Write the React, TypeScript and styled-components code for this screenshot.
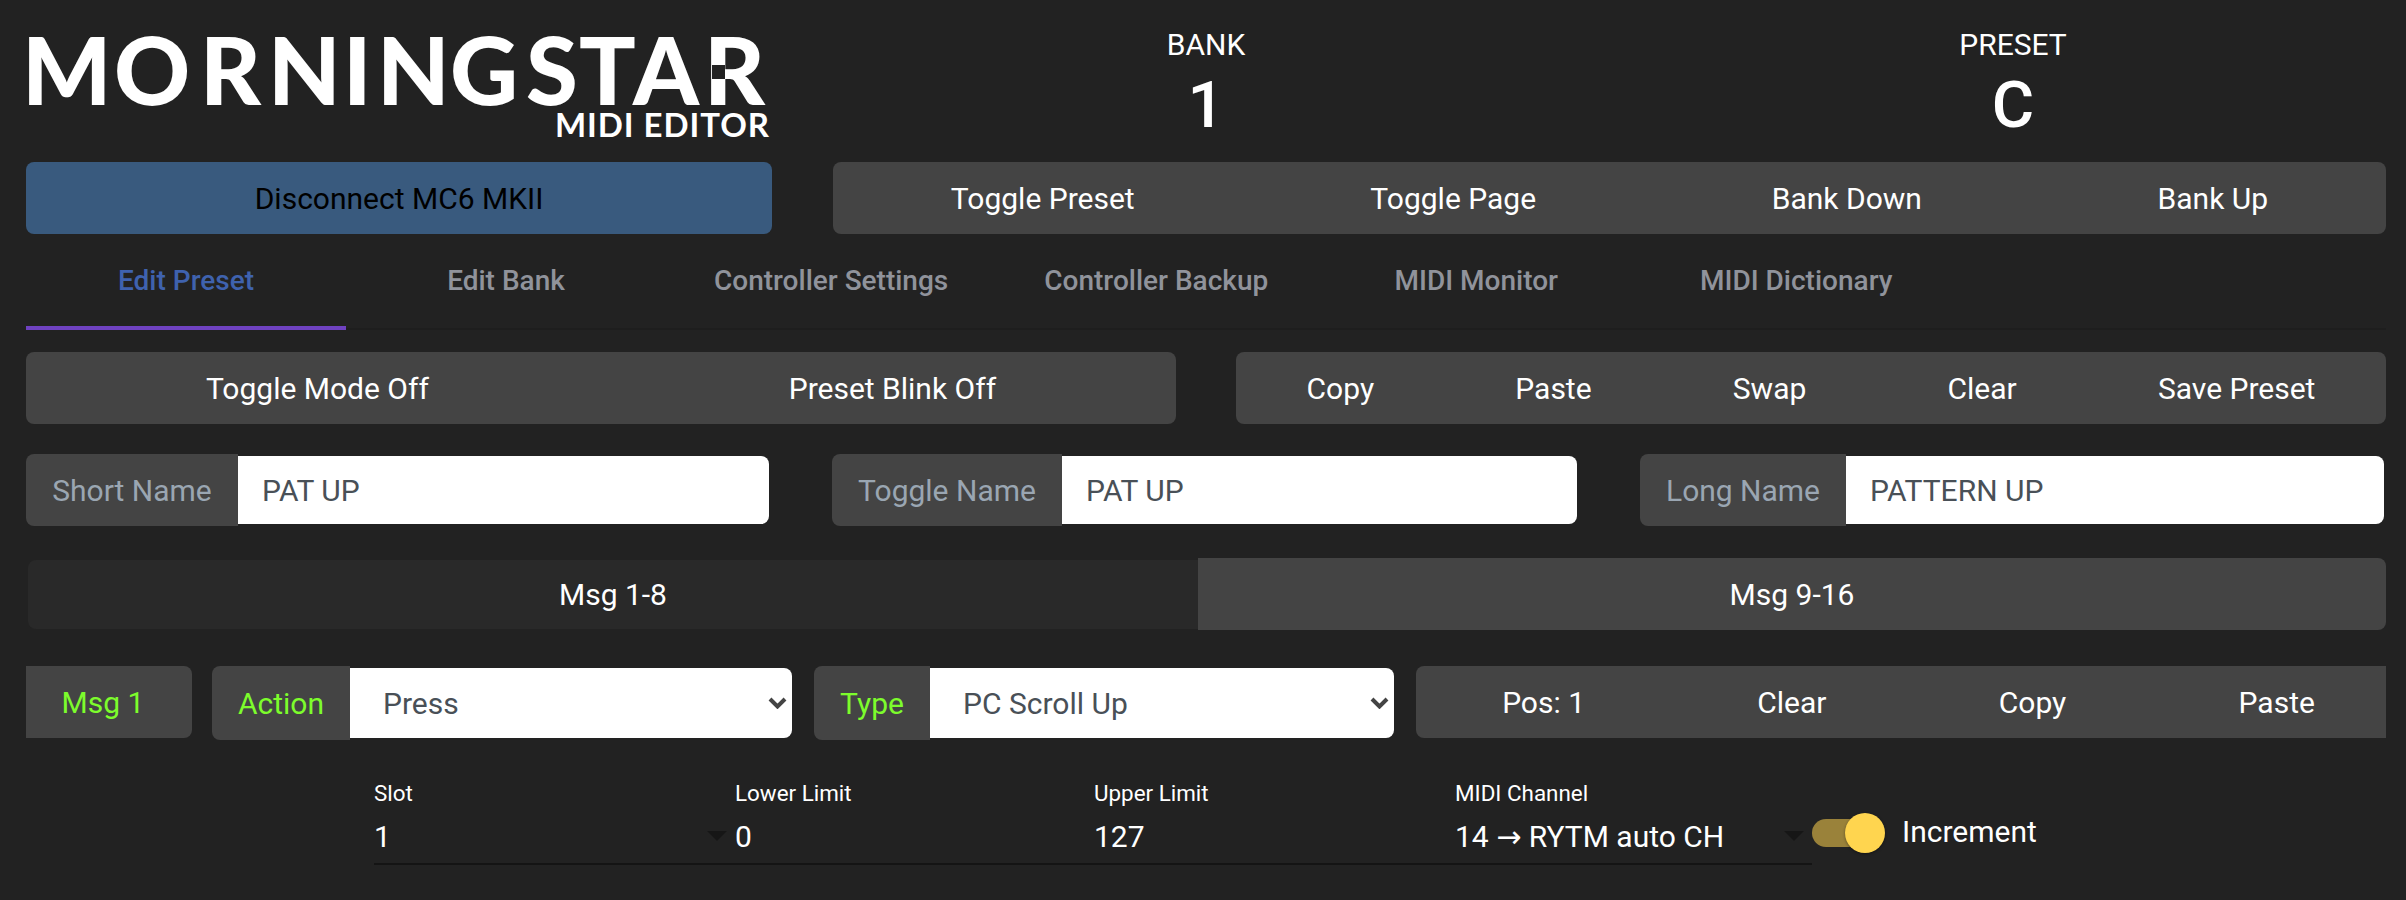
import styled, { createGlobalStyle } from 'styled-components';

const GlobalStyle = createGlobalStyle`
    html, body {
        margin: 0;
        background: #222222;
    }
    body {
        font-family: Roboto, "Liberation Sans", sans-serif;
        color: #ffffff;
    }
`;

const Page = styled.div`
    width: 2360px;
    height: 900px;
    padding: 0 20px 0 26px;
    overflow: hidden;
`;

const Header = styled.header`
    display: grid;
    grid-template-columns: 778px 804px 778px;
    height: 162px;
`;

const LogoMark = styled.svg`
    display: block;
    margin-left: -26px;
    width: 804px;
    height: 162px;
`;

const LogoText = styled.text<{ $size: number; $weight: number }>`
    font-family: Lato, sans-serif;
    font-weight: ${({ $weight }) => $weight};
    font-size: ${({ $size }) => $size}px;
    fill: #ffffff;
`;

const Stat = styled.div<{ $shift?: number }>`
    padding-top: 27px;
    padding-left: ${({ $shift }) => $shift ?? 0}px;
    text-align: center;
`;

const StatLabel = styled.div`
    font-size: 30px;
    line-height: 36px;
`;

const StatValue = styled.div`
    margin-top: 8px;
    font-size: 65px;
    font-weight: 500;
    line-height: 68px;
`;

const TopRow = styled.div`
    display: grid;
    grid-template-columns: 746px 1553px;
    column-gap: 61px;
`;

const ButtonGroup = styled.div`
    display: flex;
    height: 72px;
    background: #444444;
    border-radius: 8px;
    overflow: hidden;
`;

const GroupButton = styled.button`
    flex: 1 1 auto;
    padding: 0;
    border: 0;
    background: transparent;
    color: #ffffff;
    font: 400 30px Roboto, sans-serif;
`;

const ConnectButton = styled.button`
    height: 72px;
    padding: 0;
    border: 0;
    border-radius: 8px;
    background: #395a7e;
    color: #000000;
    font: 400 30px Roboto, sans-serif;
`;

const Tabs = styled.nav`
    display: flex;
    height: 96px;
    border-bottom: 2px solid #1e1e1e;
    box-sizing: border-box;
`;

const Tab = styled.div<{ $active?: boolean }>`
    box-sizing: border-box;
    min-width: 320px;
    height: 96px;
    padding: 0 48px;
    display: flex;
    align-items: center;
    justify-content: center;
    font-size: 28px;
    font-weight: 500;
    color: ${({ $active }) => ($active ? '#3f62ae' : '#90939b')};
    border-bottom: 4px solid ${({ $active }) => ($active ? '#6f42c1' : 'transparent')};
`;

const PresetRow = styled.div`
    display: grid;
    grid-template-columns: 1150px 1150px;
    column-gap: 60px;
    margin-top: 22px;
`;

const NameRow = styled.div`
    display: grid;
    grid-template-columns: 743px 745px 744px;
    column-gap: 63px;
    margin-top: 30px;
`;

const InputGroup = styled.label`
    display: flex;
    align-items: center;
    height: 72px;
`;

const Addon = styled.span<{ $green?: boolean; $width: number }>`
    flex: 0 0 ${({ $width }) => $width}px;
    box-sizing: border-box;
    height: 100%;
    display: flex;
    align-items: center;
    justify-content: center;
    background: #444444;
    border-radius: 8px 0 0 8px;
    font-size: 30px;
    color: ${({ $green }) => ($green ? '#7dfc2c' : '#9aa6b2')};
`;

const TextInput = styled.input`
    flex: 1;
    min-width: 0;
    box-sizing: border-box;
    height: 68px;
    padding: 0 24px;
    border: 0;
    outline: 0;
    border-radius: 0 8px 8px 0;
    background: #ffffff;
    color: #495057;
    font: 400 30px Roboto, sans-serif;
`;

const MsgTabs = styled.div`
    display: flex;
    align-items: center;
    margin-top: 32px;
    height: 72px;
`;

const MsgTab = styled.button<{ $active?: boolean }>`
    flex: ${({ $active }) => ($active ? '0 0 1170px' : '1 1 0')};
    padding: 0;
    border: 0;
    color: #ffffff;
    font: 400 30px Roboto, sans-serif;
    background: ${({ $active }) => ($active ? '#292929' : '#444444')};
    height: ${({ $active }) => ($active ? '69px' : '72px')};
    margin-left: ${({ $active }) => ($active ? '2px' : '0')};
    border-radius: ${({ $active }) => ($active ? '8px 0 0 8px' : '0 8px 8px 0')};
`;

const MessageRow = styled.div`
    display: grid;
    grid-template-columns: 166px 20px 580px 22px 580px 22px 970px;
    align-items: start;
    margin-top: 36px;
`;

const MsgBadge = styled.div`
    height: 72px;
    padding-right: 12px;
    box-sizing: border-box;
    display: flex;
    align-items: center;
    justify-content: center;
    background: #444444;
    border-radius: 0 8px 8px 0;
    font-size: 30px;
    color: #7dfc2c;
`;

const SelectGroup = styled.label`
    display: flex;
    height: 74px;
    &:nth-of-type(1) {
        grid-column: 3;
    }
    &:nth-of-type(2) {
        grid-column: 5;
    }
`;

/* the message actions run wider than their column and get cut at its edge */
const ActionsClip = styled.div`
    grid-column: 7;
    overflow: hidden;
`;

const ActionsGroup = styled(ButtonGroup)`
    width: 985px;
`;

const SelectBox = styled.span`
    position: relative;
    flex: 1;
    align-self: center;
    height: 70px;
`;

const WhiteSelect = styled.select`
    appearance: none;
    display: block;
    width: 100%;
    height: 70px;
    padding: 0 33px;
    border: 0;
    outline: 0;
    border-radius: 0 8px 8px 0;
    background: #ffffff;
    color: #495057;
    font: 400 30px Roboto, sans-serif;
`;

const Chevron = styled.svg`
    position: absolute;
    right: 5px;
    top: 29px;
    width: 19px;
    height: 12px;
    pointer-events: none;
`;

const ParamRow = styled.div`
    display: flex;
    margin-top: 41px;
    margin-left: 348px;
`;

const ParamFields = styled.div`
    display: grid;
    grid-template-columns: 361px 359px 361px 357px;
    border-bottom: 2px solid #141414;
    height: 82px;
`;

const Field = styled.label`
    position: relative;
    display: flex;
    flex-direction: column;
`;

const FieldLabel = styled.span`
    font-size: 22.4px;
    line-height: 24px;
`;

const fieldControl = `
    appearance: none;
    box-sizing: border-box;
    width: 100%;
    height: 50px;
    margin-top: 6px;
    padding: 0;
    border: 0;
    outline: 0;
    background: transparent;
    color: #ffffff;
    font: 400 30px Roboto, "DejaVu Sans", sans-serif;
`;

const FieldInput = styled.input`
    ${fieldControl}
`;

const FieldSelect = styled.select`
    ${fieldControl}
    option {
        background: #222222;
    }
`;

const Caret = styled.span`
    position: absolute;
    right: 8px;
    top: 50px;
    width: 0;
    height: 0;
    border-left: 10px solid transparent;
    border-right: 10px solid transparent;
    border-top: 10px solid #161616;
    pointer-events: none;
`;

const ToggleField = styled.div`
    display: flex;
    align-items: center;
    height: 64px;
    margin-top: 20px;
    gap: 18px;
`;

const Track = styled.span`
    position: relative;
    display: block;
    width: 72px;
    height: 28px;
`;

const TrackFill = styled.span`
    display: block;
    width: 58px;
    height: 28px;
    border-radius: 14px;
    background: #9a823a;
`;

const Thumb = styled.span`
    position: absolute;
    left: 33px;
    top: -6px;
    width: 40px;
    height: 40px;
    border-radius: 50%;
    background: #ffd54f;
    box-shadow: 0 1px 3px rgba(0, 0, 0, 0.4);
`;

const ToggleLabel = styled.span`
    margin-bottom: 4px;
    font-size: 30px;
`;

const LOGO_X = '22 114 200 268 343 377 450 526 579 633 704';

const App = () => (
    <Page>
        <GlobalStyle />
        <Header>
            <LogoMark viewBox="0 0 804 162" aria-label="Morningstar MIDI Editor">
                <LogoText $size={94} $weight={900} x={LOGO_X} y="105">
                    MORNINGSTAR
                </LogoText>
                <rect x="712" y="65" width="13" height="14" fill="#222222" />
                <LogoText $size={33} $weight={700} x="555" y="137" textLength="214" lengthAdjust="spacing">
                    MIDI EDITOR
                </LogoText>
            </LogoMark>
            <Stat>
                <StatLabel>BANK</StatLabel>
                <StatValue>1</StatValue>
            </Stat>
            <Stat $shift={32}>
                <StatLabel>PRESET</StatLabel>
                <StatValue>C</StatValue>
            </Stat>
        </Header>

        <TopRow>
            <ConnectButton>Disconnect MC6 MKII</ConnectButton>
            <ButtonGroup>
                <GroupButton>Toggle Preset</GroupButton>
                <GroupButton>Toggle Page</GroupButton>
                <GroupButton>Bank Down</GroupButton>
                <GroupButton>Bank Up</GroupButton>
            </ButtonGroup>
        </TopRow>

        <Tabs>
            <Tab $active>Edit Preset</Tab>
            <Tab>Edit Bank</Tab>
            <Tab>Controller Settings</Tab>
            <Tab>Controller Backup</Tab>
            <Tab>MIDI Monitor</Tab>
            <Tab>MIDI Dictionary</Tab>
        </Tabs>

        <PresetRow>
            <ButtonGroup>
                <GroupButton>Toggle Mode Off</GroupButton>
                <GroupButton>Preset Blink Off</GroupButton>
            </ButtonGroup>
            <ButtonGroup>
                <GroupButton>Copy</GroupButton>
                <GroupButton>Paste</GroupButton>
                <GroupButton>Swap</GroupButton>
                <GroupButton>Clear</GroupButton>
                <GroupButton>Save Preset</GroupButton>
            </ButtonGroup>
        </PresetRow>

        <NameRow>
            <InputGroup>
                <Addon $width={212}>Short Name</Addon>
                <TextInput defaultValue="PAT UP" />
            </InputGroup>
            <InputGroup>
                <Addon $width={230}>Toggle Name</Addon>
                <TextInput defaultValue="PAT UP" />
            </InputGroup>
            <InputGroup>
                <Addon $width={206}>Long Name</Addon>
                <TextInput defaultValue="PATTERN UP" />
            </InputGroup>
        </NameRow>

        <MsgTabs>
            <MsgTab $active>Msg 1-8</MsgTab>
            <MsgTab>Msg 9-16</MsgTab>
        </MsgTabs>

        <MessageRow>
            <MsgBadge>Msg 1</MsgBadge>
            <SelectGroup>
                <Addon $green $width={138}>Action</Addon>
                <SelectBox>
                    <WhiteSelect defaultValue="Press">
                        <option>Press</option>
                        <option>Release</option>
                    </WhiteSelect>
                    <Chevron viewBox="0 0 19 12">
                        <path d="M2 2l7.5 7.5L17 2" fill="none" stroke="#444" strokeWidth="4" />
                    </Chevron>
                </SelectBox>
            </SelectGroup>
            <SelectGroup>
                <Addon $green $width={116}>Type</Addon>
                <SelectBox>
                    <WhiteSelect defaultValue="PC Scroll Up">
                        <option>PC Scroll Up</option>
                        <option>PC Scroll Down</option>
                    </WhiteSelect>
                    <Chevron viewBox="0 0 19 12">
                        <path d="M2 2l7.5 7.5L17 2" fill="none" stroke="#444" strokeWidth="4" />
                    </Chevron>
                </SelectBox>
            </SelectGroup>
            <ActionsClip>
                <ActionsGroup>
                    <GroupButton>Pos: 1</GroupButton>
                    <GroupButton>Clear</GroupButton>
                    <GroupButton>Copy</GroupButton>
                    <GroupButton>Paste</GroupButton>
                </ActionsGroup>
            </ActionsClip>
        </MessageRow>

        <ParamRow>
            <ParamFields>
                <Field>
                    <FieldLabel>Slot</FieldLabel>
                    <FieldSelect defaultValue="1">
                        <option>1</option>
                    </FieldSelect>
                    <Caret />
                </Field>
                <Field>
                    <FieldLabel>Lower Limit</FieldLabel>
                    <FieldInput defaultValue="0" />
                </Field>
                <Field>
                    <FieldLabel>Upper Limit</FieldLabel>
                    <FieldInput defaultValue="127" />
                </Field>
                <Field>
                    <FieldLabel>MIDI Channel</FieldLabel>
                    <FieldSelect defaultValue="14 → RYTM auto CH">
                        <option>14 → RYTM auto CH</option>
                    </FieldSelect>
                    <Caret />
                </Field>
            </ParamFields>
            <ToggleField>
                <Track>
                    <TrackFill />
                    <Thumb />
                </Track>
                <ToggleLabel>Increment</ToggleLabel>
            </ToggleField>
        </ParamRow>
    </Page>
);

export default App;
